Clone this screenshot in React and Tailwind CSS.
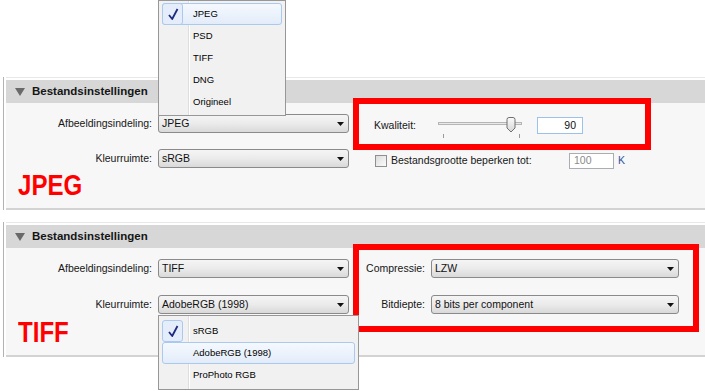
const Caret = () => (
  <svg width="7" height="4" viewBox="0 0 7 4">
    <path d="M0 0h7L3.5 4z" fill="#111" />
  </svg>
);

const Check = () => (
  <svg width="12" height="14" viewBox="0 0 12 14">
    <path d="M2 8 L5.2 12 L10.5 2" fill="none" stroke="#1c2a80" strokeWidth="1.8" strokeLinejoin="round" />
  </svg>
);

const Select = ({ value, width }) => (
  <div
    className={`${width} h-[19px] rounded-[3px] border border-[#8a8a8a] bg-linear-to-b from-[#f5f5f5] via-[#ebebeb] to-[#d9d9d9] flex items-center justify-between pl-[3px] pr-[4px] text-[10.5px] text-[#111]`}
  >
    <span>{value}</span>
    <Caret />
  </div>
);

const Row = ({ label, value, labelW = 'w-[146px]', selectW = 'w-[191px]', className = '' }) => (
  <div className={`flex items-center h-[19px] ${className}`}>
    <span className={`${labelW} text-right text-[10.5px] text-[#161616]`}>{label}</span>
    <div className="ml-[6px]">
      <Select value={value} width={selectW} />
    </div>
  </div>
);

const MenuItem = ({ label, checked, hover }) => (
  <div className="relative h-[22px] flex items-center">
    {hover && (
      <div className="absolute inset-0 rounded-[3px] border border-[#a9c9ef] bg-linear-to-b from-[#f5f9fe] to-[#e2ecf9]" />
    )}
    {checked && (
      <div className="absolute left-0 top-0 w-[21px] h-[22px] rounded-[3px] border border-[#a9c9ef] bg-[#e4edf9] flex items-center justify-center">
        <Check />
      </div>
    )}
    <span className="relative pl-[31px] text-[9.5px] text-black">{label}</span>
  </div>
);

const Menu = ({ items, checked, hover, className }) => (
  <div className={`absolute border border-[#979797] bg-[#f1f1f1] px-[3px] ${className}`}>
    <div className="absolute left-[29px] top-0 bottom-0 w-[2px] border-l border-[#dedede] bg-white" />
    {items.map((item) => (
      <MenuItem key={item} label={item} checked={item === checked} hover={item === hover} />
    ))}
  </div>
);

const Panel = ({ children, bodyH, className = '' }) => (
  <section className={`ml-[3px] border-l border-[#b3b3b3] pl-[2px] ${className}`}>
    <div className="h-[3px] border-t border-[#e8e8e8]" />
    <div className="h-[23px] bg-[#d7d7d7] flex items-center pl-[9px]">
      <svg width="10" height="8" viewBox="0 0 10 8">
        <path d="M0 0h10L5 8z" fill="#6a6a6a" />
      </svg>
      <span className="ml-[7px] text-[11.5px] font-bold text-[#151515]">Bestandsinstellingen</span>
    </div>
    <div className={`bg-[#f7f7f7] flex ${bodyH}`}>{children}</div>
    <div className="h-[2px] bg-[#d3d3d3]" />
  </section>
);

const RedTag = ({ children, className }) => (
  <div className={`ml-[12px] origin-left scale-x-[0.83] text-[29px] leading-none font-bold text-[#ff0000] ${className}`}>
    {children}
  </div>
);

export default function App() {
  return (
    <div className="relative w-[705px] h-[391px] overflow-hidden bg-white pt-[77px] font-['Liberation_Sans',Arial,sans-serif]">
      <Panel bodyH="h-[105px]">
        <div className="w-[343px] pt-[11px]">
          <Row label="Afbeeldingsindeling:" value="JPEG" />
          <Row label="Kleurruimte:" value="sRGB" className="mt-[16px]" />
          <RedTag className="mt-[3px]">JPEG</RedTag>
        </div>
        <div className="pt-[14px]">
          <div className="flex items-center h-[17px] ml-[25px]">
            <span className="w-[64px] text-[10.5px] text-[#161616]">Kwaliteit:</span>
            <div className="relative w-[84px] h-[17px]">
              <div className="absolute left-0 right-0 top-[5px] h-[3px] border border-[#b5b5b5] bg-[#e9e9e9]" />
              <div className="absolute left-[5px] top-[17px] w-px h-[4px] bg-[#9a9a9a]" />
              <div className="absolute left-[81px] top-[17px] w-px h-[4px] bg-[#9a9a9a]" />
              <svg className="absolute left-[68px] top-0" width="10" height="16" viewBox="0 0 10 16">
                <defs>
                  <linearGradient id="thumb" x1="0" x2="0" y1="0" y2="1">
                    <stop offset="0" stopColor="#fbfbfb" />
                    <stop offset="1" stopColor="#d6d6d6" />
                  </linearGradient>
                </defs>
                <path d="M1 2.5Q1 0.5 3 0.5H7Q9 0.5 9 2.5V11L5 15L1 11Z" fill="url(#thumb)" stroke="#707070" />
              </svg>
            </div>
            <div className="ml-[15px] w-[46px] h-[17px] border border-[#9dc2ea] bg-white flex items-center justify-end pr-[6px] text-[10.5px] text-[#111]">
              90
            </div>
          </div>
          <div className="flex items-center h-[16px] mt-[19px] ml-[26px]">
            <div className="w-[12px] h-[12px] border border-[#8e8f8f] bg-linear-to-br from-[#dcdcdc] to-[#fbfbfb]" />
            <span className="ml-[4px] w-[178px] text-[10.5px] text-[#161616]">Bestandsgrootte beperken tot:</span>
            <div className="w-[45px] h-[16px] border border-[#abadb3] bg-white flex items-center pl-[4px] text-[10.5px] text-[#8a8a8a]">
              100
            </div>
            <span className="ml-[4px] text-[10.5px] text-[#2f55a4]">K</span>
          </div>
        </div>
      </Panel>

      <Panel bodyH="h-[107px]" className="mt-[12px]">
        <div className="w-[343px] pt-[11px]">
          <Row label="Afbeeldingsindeling:" value="TIFF" />
          <Row label="Kleurruimte:" value="AdobeRGB (1998)" className="mt-[17px]" />
          <RedTag className="mt-[4px]">TIFF</RedTag>
        </div>
        <div className="pt-[11px]">
          <Row label="Compressie:" value="LZW" labelW="w-[76px]" selectW="w-[248px]" />
          <Row label="Bitdiepte:" value="8 bits per component" labelW="w-[76px]" selectW="w-[248px]" className="mt-[17px]" />
        </div>
      </Panel>

      <div className="absolute left-[353px] top-[98px] w-[298px] h-[52px] border-[6px] border-[#ff0000]" />
      <div className="absolute left-[353px] top-[244px] w-[346px] h-[88px] border-[6px] border-[#ff0000]" />

      <Menu
        className="left-[158px] top-0 w-[128px] pt-[2px] pb-[2px]"
        items={['JPEG', 'PSD', 'TIFF', 'DNG', 'Origineel']}
        checked="JPEG"
        hover="JPEG"
      />
      <Menu
        className="left-[158px] top-[315px] w-[201px] pt-[4px] pb-[3px]"
        items={['sRGB', 'AdobeRGB (1998)', 'ProPhoto RGB']}
        checked="sRGB"
        hover="AdobeRGB (1998)"
      />
    </div>
  );
}
